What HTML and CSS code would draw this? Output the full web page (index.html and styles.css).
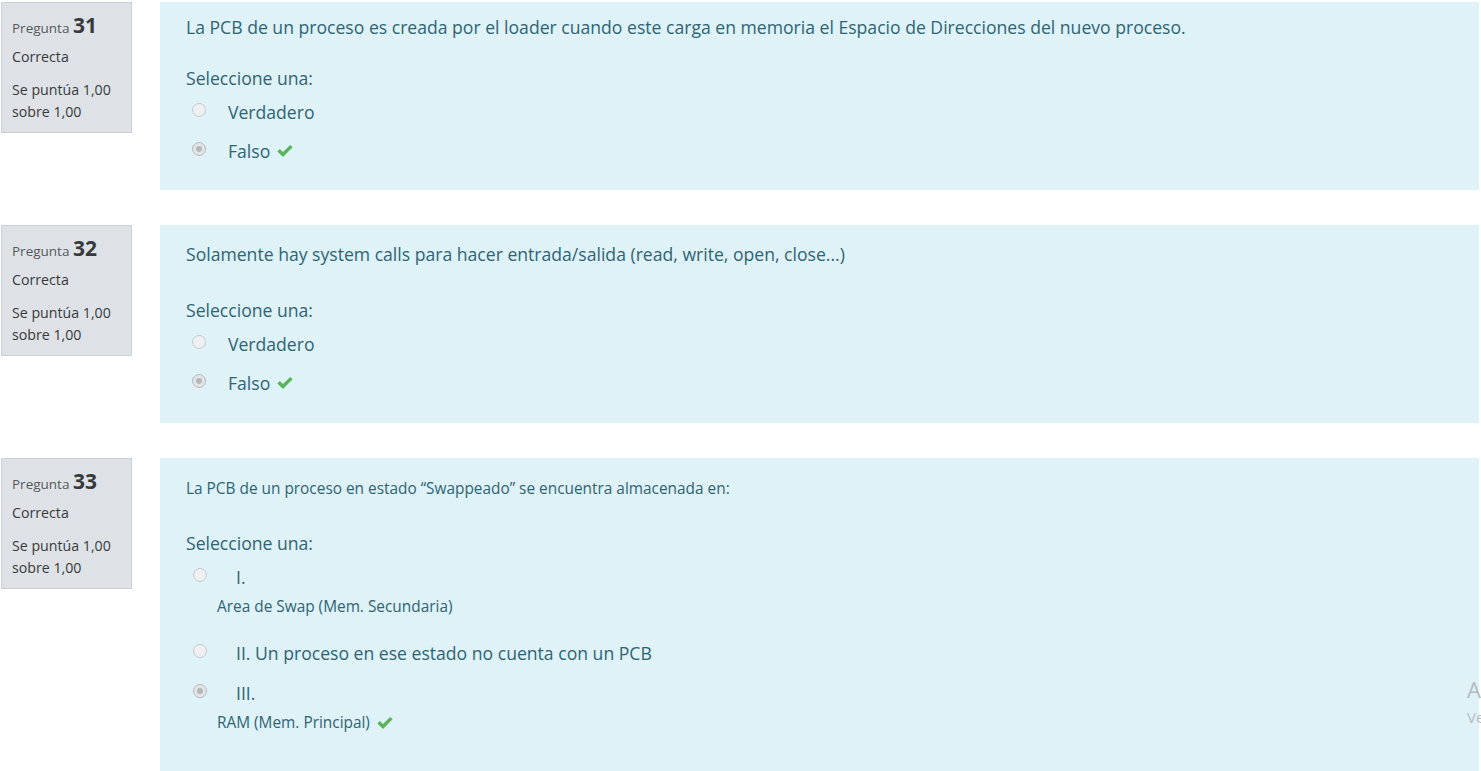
FILE: index.html
```html
<!DOCTYPE html>
<html lang="es">
<head>
<meta charset="utf-8">
<title>Cuestionario</title>
<link rel="stylesheet" href="styles.css">
</head>
<body>
<div class="page">
  <div class="que">
    <div class="info">
      <div class="qno"><span class="lbl">Pregunta</span> <span class="num">31</span></div>
      <div class="state">Correcta</div>
      <div class="grade">Se puntúa 1,00 sobre 1,00</div>
    </div>
    <div class="content">
      <div class="qtext">La PCB de un proceso es creada por el loader cuando este carga en memoria el Espacio de Direcciones del nuevo proceso.</div>
      <div class="prompt">Seleccione una:</div>
      <div class="answer">
        <div class="opt"><span class="radio"></span><span class="lab">Verdadero</span></div>
        <div class="opt"><span class="radio checked"></span><span class="lab">Falso <svg class="check" viewBox="0 0 16 13"><path d="M1.2 7.3 L3.4 5.1 L6.2 7.9 L12.6 1.5 L14.8 3.7 L6.2 12.3 Z" fill="#5bb65b"/></svg></span></div>
      </div>
    </div>
  </div>

  <div class="que">
    <div class="info">
      <div class="qno"><span class="lbl">Pregunta</span> <span class="num">32</span></div>
      <div class="state">Correcta</div>
      <div class="grade">Se puntúa 1,00 sobre 1,00</div>
    </div>
    <div class="content tall">
      <div class="qtext para">Solamente hay system calls para hacer entrada/salida (read, write, open, close...)</div>
      <div class="prompt">Seleccione una:</div>
      <div class="answer">
        <div class="opt"><span class="radio"></span><span class="lab">Verdadero</span></div>
        <div class="opt"><span class="radio checked"></span><span class="lab">Falso <svg class="check" viewBox="0 0 16 13"><path d="M1.2 7.3 L3.4 5.1 L6.2 7.9 L12.6 1.5 L14.8 3.7 L6.2 12.3 Z" fill="#5bb65b"/></svg></span></div>
      </div>
    </div>
  </div>

  <div class="que">
    <div class="info">
      <div class="qno"><span class="lbl">Pregunta</span> <span class="num">33</span></div>
      <div class="state">Correcta</div>
      <div class="grade">Se puntúa 1,00 sobre 1,00</div>
    </div>
    <div class="content">
      <div class="qtext small">La PCB de un proceso en estado “Swappeado” se encuentra almacenada en:</div>
      <div class="prompt">Seleccione una:</div>
      <div class="answer multi">
        <div class="opt multi"><span class="radio"></span><span class="lab">I.</span></div>
        <div class="sub">Area de Swap (Mem. Secundaria)</div>
        <div class="opt multi second"><span class="radio"></span><span class="lab">II. Un proceso en ese estado no cuenta con un PCB</span></div>
        <div class="opt multi"><span class="radio checked"></span><span class="lab">III.</span></div>
        <div class="sub">RAM (Mem. Principal) <svg class="check" viewBox="0 0 16 13"><path d="M1.2 7.3 L3.4 5.1 L6.2 7.9 L12.6 1.5 L14.8 3.7 L6.2 12.3 Z" fill="#5bb65b"/></svg></div>
      </div>
    </div>
  </div>
  <div class="watermark"><div class="wm1">Activar Windows</div><div class="wm2">Ve a Configuración para activar Windows.</div></div>
</div>
</body>
</html>
```
FILE: styles.css
```css
html, body {
  margin: 0;
  padding: 0;
  background: #fff;
  overflow: hidden;
}
body {
  font-family: "Open Sans", "Noto Sans", sans-serif;
  color: #373a3c;
}
.page {
  position: relative;
  padding: 2px 2px 0 1px;
  height: 769px;
  overflow: hidden;
}
.que {
  display: flex;
  align-items: flex-start;
  gap: 28px;
  margin-bottom: 35px;
}
.info {
  flex: 0 0 auto;
  width: 109px;
  padding: 9px 10px 9px 10px;
  background: #dee2e6;
  border: 1px solid #cad0d7;
  font-size: 14.2px;
  line-height: 22px;
  color: #373a3c;
}
.qno {
  height: 26px;
  line-height: 26px;
  margin-bottom: 8px;
  white-space: nowrap;
}
.lbl {
  font-size: 13.5px;
  color: #555a5e;
}
.num {
  font-size: 21px;
  font-weight: 700;
  color: #373a3c;
}
.state {
  margin-bottom: 11px;
}
.content {
  flex: 1 1 auto;
  background: #def2f8;
  color: #2f6473;
  padding: 12px 26px 20px 26px;
}
.content.tall {
  padding-bottom: 21px;
}
.qtext {
  font-size: 17.6px;
  line-height: 26px;
  margin-bottom: 25px;
}
.qtext.para {
  padding-top: 4px;
  margin-bottom: 30px;
}
.qtext.small {
  font-size: 15.4px;
  line-height: 22px;
  padding-top: 8px;
  margin-bottom: 30px;
}
.prompt {
  font-size: 17.6px;
  line-height: 26px;
  margin-bottom: 1px;
}
.answer.multi {
  margin-top: 6px;
}
.opt {
  display: flex;
  align-items: center;
  height: 39px;
  font-size: 17.6px;
}
.radio {
  width: 14px;
  height: 14px;
  margin-left: 6px;
  margin-right: 22px;
  border-radius: 50%;
  border: 1px solid #c6cacd;
  background: #eef0f2;
  box-sizing: border-box;
  position: relative;
  flex: 0 0 auto;
  transform: translateY(-2px);
}
.radio.checked {
  background: #e2e4e6;
  border-color: #b6babd;
}
.radio.checked::after {
  content: "";
  position: absolute;
  left: 3px;
  top: 3px;
  width: 6px;
  height: 6px;
  border-radius: 50%;
  background: #b5b8bb;
}
.lab {
  display: inline-flex;
  align-items: center;
  gap: 6px;
}
.check {
  width: 18px;
  height: 15px;
}
.opt.multi {
  height: 30px;
}
.opt.multi .radio {
  margin-left: 7px;
  margin-right: 29px;
}
.sub {
  font-size: 15.4px;
  padding-left: 31px;
  height: 29px;
  line-height: 29px;
  margin-bottom: 17px;
  display: flex;
  align-items: center;
  gap: 6px;
}
.opt.multi.second {
  margin-bottom: 10px;
}
.sub:last-child {
  margin-bottom: 16px;
}
.watermark {
  position: absolute;
  left: 1467px;
  top: 675px;
  color: #b4bcc0;
  white-space: nowrap;
}
.wm1 {
  font-size: 22px;
  line-height: 28px;
}
.wm2 {
  font-size: 15px;
  line-height: 28px;
}
```
